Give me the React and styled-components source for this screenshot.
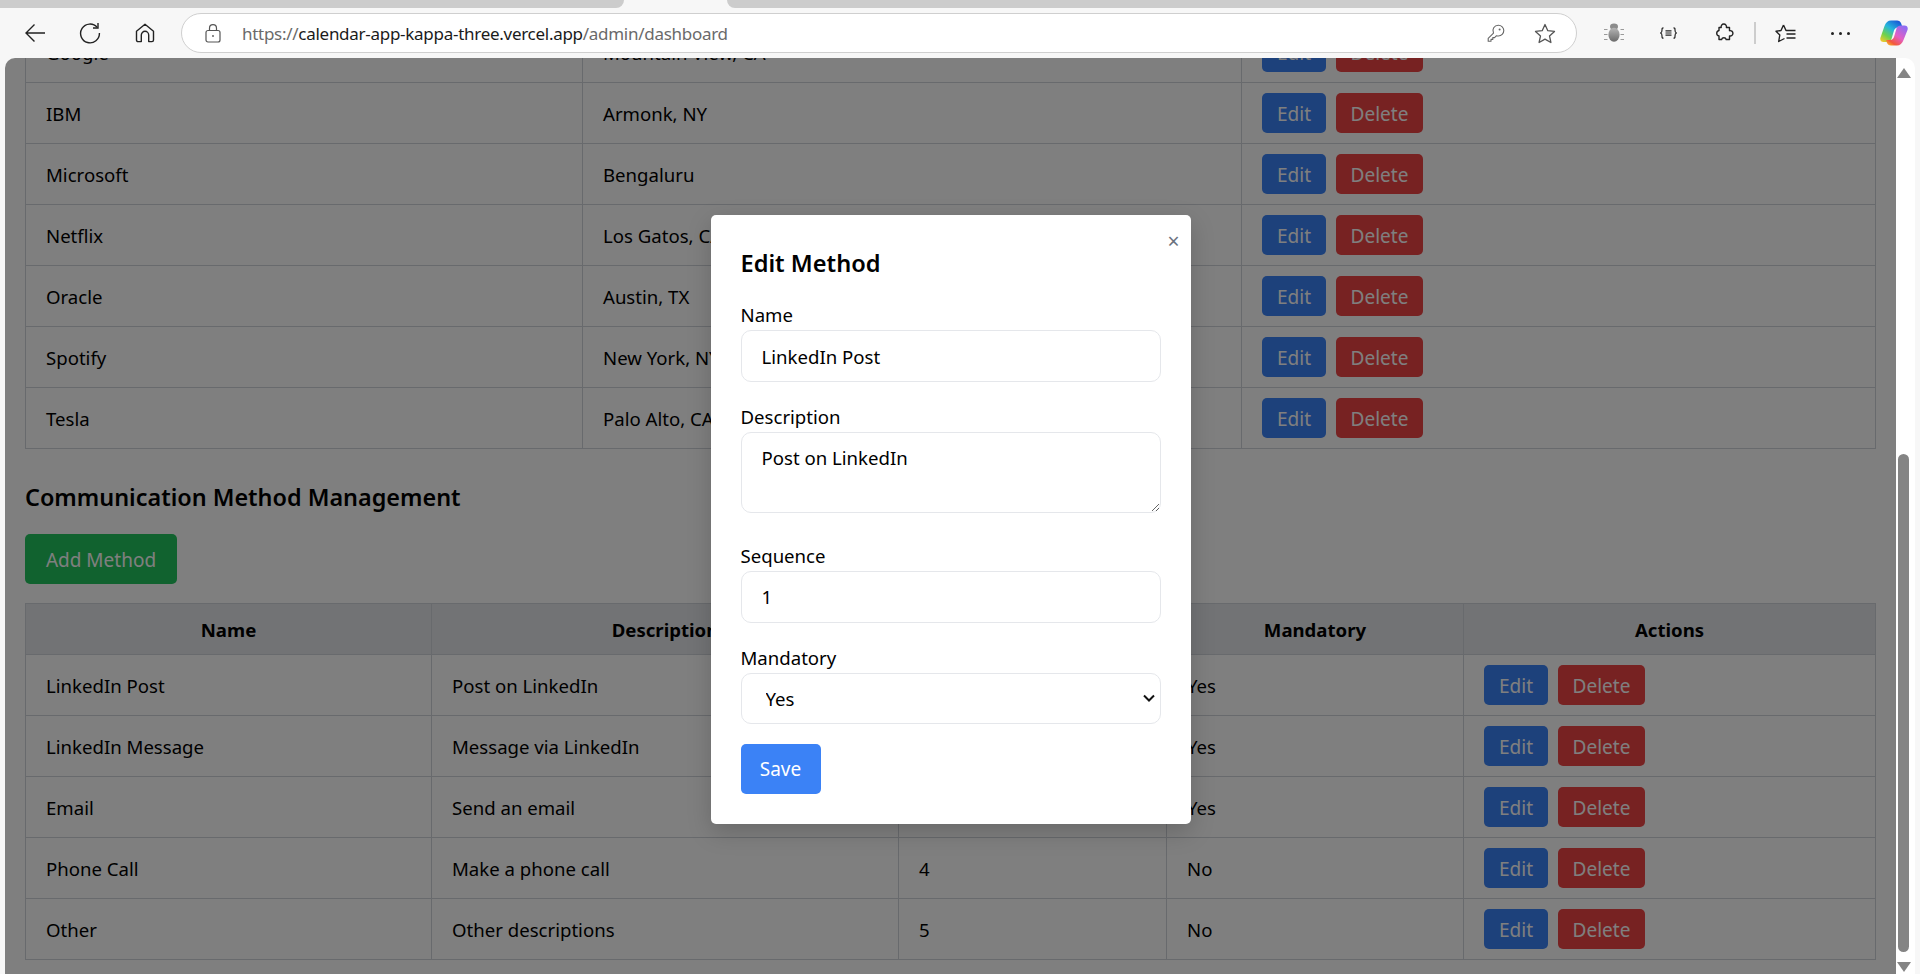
import styled, { createGlobalStyle } from "styled-components";

const companies = [
  ["Google", "Mountain View, CA"],
  ["IBM", "Armonk, NY"],
  ["Microsoft", "Bengaluru"],
  ["Netflix", "Los Gatos, CA"],
  ["Oracle", "Austin, TX"],
  ["Spotify", "New York, NY"],
  ["Tesla", "Palo Alto, CA"],
];

const methods = [
  ["LinkedIn Post", "Post on LinkedIn", 1, "Yes"],
  ["LinkedIn Message", "Message via LinkedIn", 2, "Yes"],
  ["Email", "Send an email", 3, "Yes"],
  ["Phone Call", "Make a phone call", 4, "No"],
  ["Other", "Other descriptions", 5, "No"],
];

function RowActions() {
  return (
    <ActionRow>
      <ActionButton $tone="blue">Edit</ActionButton>
      <ActionButton $tone="red">Delete</ActionButton>
    </ActionRow>
  );
}

function BrowserBar() {
  return (
    <>
      <TabStrip>
        <StripPiece $width="624px" $corner="right" />
        <ActiveTab />
        <StripPiece $corner="left" />
      </TabStrip>
      <Toolbar>
        <IconSlot>
          <svg width="22" height="20" viewBox="0 0 22 20" fill="none" stroke="#222" strokeWidth="1.4">
            <path d="M21 10H2M10.5 1.5 2 10l8.5 8.5" />
          </svg>
        </IconSlot>
        <IconSlot>
          <svg width="22" height="22" viewBox="0 0 22 22" fill="none" stroke="#222" strokeWidth="1.4">
            <path d="M18.2 5.4A9.4 9.4 0 1 0 20.4 11" />
            <path d="M19 1v5h-5" />
          </svg>
        </IconSlot>
        <IconSlot>
          <svg width="20" height="20" viewBox="0 0 20 20" fill="none" stroke="#222" strokeWidth="1.4">
            <path d="M1.5 8.2 10 1.2l8.5 7V17a1.6 1.6 0 0 1-1.6 1.6h-3.2V12a3.7 3.7 0 0 0-7.4 0v6.6H3.1A1.6 1.6 0 0 1 1.5 17Z" strokeLinejoin="round" />
          </svg>
        </IconSlot>
        <AddressBar>
          <svg width="16" height="19" viewBox="0 0 16 19" fill="none" stroke="#555" strokeWidth="1.2">
            <rect x="1" y="6.5" width="14" height="11.5" rx="2" />
            <path d="M4.5 6.5V4.2a3.5 3.5 0 0 1 7 0v2.3" />
            <circle cx="8" cy="12" r="0.9" fill="#555" stroke="none" />
          </svg>
          <Url>
            https://<strong>calendar-app-kappa-three.vercel.app</strong>/admin/dashboard
          </Url>
          <BarIcons>
            <svg width="18" height="18" viewBox="0 0 18 18" fill="none" stroke="#666" strokeWidth="1.1">
              <path d="M11.4 1.2a5.4 5.4 0 0 1 0 10.8c-.7 0-1.3-.1-1.9-.3L7.6 13.6H5.8v1.8H4v1.8H1.2v-2.8l5.3-5.3a5.4 5.4 0 0 1 4.9-7.9Z" strokeLinejoin="round" />
              <circle cx="12.6" cy="5.4" r="1" fill="#666" stroke="none" />
            </svg>
            <svg width="22" height="21" viewBox="0 0 22 21" fill="none" stroke="#555" strokeWidth="1.3">
              <path d="m11 1.5 2.8 6.2 6.7.7-5 4.5 1.4 6.6-5.9-3.4-5.9 3.4 1.4-6.6-5-4.5 6.7-.7Z" strokeLinejoin="round" />
            </svg>
          </BarIcons>
        </AddressBar>
        <ExtensionGroup>
          <IconSlot>
            <svg width="20" height="20" viewBox="0 0 20 20">
              <defs>
                <linearGradient id="bugBody" x1="0" y1="0" x2="0" y2="1">
                  <stop offset="0" stopColor="#b5b5b5" />
                  <stop offset="1" stopColor="#6a6a6a" />
                </linearGradient>
              </defs>
              <ellipse cx="10" cy="3.6" rx="4" ry="3.2" fill="#8c8c8c" />
              <ellipse cx="10" cy="11.8" rx="5.6" ry="7" fill="url(#bugBody)" />
              <path d="M0 6.5h3.5M16.5 6.5H20M0 11.5h3.5M16.5 11.5H20M0 16.5h3.5M16.5 16.5H20" stroke="#9a9a9a" strokeWidth="1" />
            </svg>
          </IconSlot>
          <IconSlot>
            <svg width="17" height="12" viewBox="0 0 17 12" fill="none" stroke="#222" strokeWidth="1.2">
              <path d="M3.5.8c-1.6 0-1.5 1-1.5 2.2 0 1.6-.2 2.6-1.3 3 1.1.4 1.3 1.4 1.3 3 0 1.2-.1 2.2 1.5 2.2M13.5.8c1.6 0 1.5 1 1.5 2.2 0 1.6.2 2.6 1.3 3-1.1.4-1.3 1.4-1.3 3 0 1.2.1 2.2-1.5 2.2" />
              <path d="M5.5 3.8h6M5.5 6h6M5.5 8.2h6" />
            </svg>
          </IconSlot>
          <IconSlot>
            <svg width="20" height="20" viewBox="0 0 20 20" fill="none" stroke="#222" strokeWidth="1.4">
              <path d="M5 4.5h2.200a2.700 2.700 0 1 1 5.200 0h3.100v3.200a2.700 2.700 0 1 1 0 5.200v3.600h-3.300a2.400 2.400 0 0 0-4.600 0H5V13a2.800 2.800 0 0 1 0-5.500Z" strokeLinejoin="round" />
            </svg>
          </IconSlot>
        </ExtensionGroup>
        <ToolbarDivider />
        <IconSlot>
          <svg width="21" height="19" viewBox="0 0 21 19" fill="none" stroke="#222" strokeWidth="1.4">
            <path d="M8.5 1 11 6.500h9.500M8.500 1 6 6.500l-5 .8 3.800 3.700-1.100 6.500 5.800-3" strokeLinejoin="round" />
            <path d="M11.500 10h9M11.500 14h9" />
          </svg>
        </IconSlot>
        <IconSlot>
          <Dots>
            <i />
            <i />
            <i />
          </Dots>
        </IconSlot>
        <CopilotSlot>
          <svg width="28" height="26" viewBox="0 0 28 26">
            <defs>
              <linearGradient id="copilotLeft" x1="0.8" y1="0" x2="0.1" y2="1">
                <stop offset="0" stopColor="#1a56d6" />
                <stop offset="0.4" stopColor="#25b6dc" />
                <stop offset="0.72" stopColor="#6fd24c" />
                <stop offset="1" stopColor="#f5c92c" />
              </linearGradient>
              <linearGradient id="copilotRight" x1="0.9" y1="0.1" x2="0.2" y2="1">
                <stop offset="0" stopColor="#8f6cf2" />
                <stop offset="0.5" stopColor="#e45fc4" />
                <stop offset="0.85" stopColor="#f2583c" />
                <stop offset="1" stopColor="#f9a02e" />
              </linearGradient>
            </defs>
            <path d="M11 .5h6c2 0 3.500 1 4.200 3l1.300 4H18c-2.500 0-3.500 1.500-4 3L11.500 19c-.5 2-2.500 3-4.500 3H3.500C1 22-.3 20 .5 17.500L4.500 6C5.700 2.500 8 .5 11 .5Z" fill="url(#copilotLeft)" />
            <path d="M17 25.500h-6c-2 0-3.500-1-4.200-3L6 20h4c2.500 0 3.500-1.500 4-3l2.500-8.500c.5-2 2.500-3 4.500-3h3.500c2.500 0 3.800 2 3 4.500l-4 10c-1.200 3.500-3.500 5.500-6.500 5.500Z" fill="url(#copilotRight)" />
          </svg>
        </CopilotSlot>
      </Toolbar>
    </>
  );
}

function EditMethodModal() {
  return (
    <Overlay>
      <Modal>
        <CloseButton>×</CloseButton>
        <ModalTitle>Edit Method</ModalTitle>
        <FieldLabel>Name</FieldLabel>
        <TextField defaultValue="LinkedIn Post" />
        <FieldLabel>Description</FieldLabel>
        <DescriptionField defaultValue="Post on LinkedIn" />
        <FieldLabel>Sequence</FieldLabel>
        <TextField type="number" defaultValue="1" />
        <FieldLabel>Mandatory</FieldLabel>
        <SelectField defaultValue="Yes">
          <option>Yes</option>
          <option>No</option>
        </SelectField>
        <SaveButton>Save</SaveButton>
      </Modal>
    </Overlay>
  );
}

export default function App() {
  return (
    <Frame>
      <GlobalStyle />
      <BrowserBar />
      <Viewport>
        <Page>
          <PageContent>
            <DataTable>
              <colgroup>
                <col width="557" />
                <col width="659" />
                <col width="634" />
              </colgroup>
              <tbody>
                {companies.map(([name, location]) => (
                  <tr key={name}>
                    <Cell>{name}</Cell>
                    <Cell>{location}</Cell>
                    <Cell>
                      <RowActions />
                    </Cell>
                  </tr>
                ))}
              </tbody>
            </DataTable>
            <SectionTitle>Communication Method Management</SectionTitle>
            <AddButton>Add Method</AddButton>
            <DataTable>
              <colgroup>
                <col width="406" />
                <col width="467" />
                <col width="268" />
                <col width="297" />
                <col width="412" />
              </colgroup>
              <thead>
                <tr>
                  <HeadCell>Name</HeadCell>
                  <HeadCell>Description</HeadCell>
                  <HeadCell>Sequence</HeadCell>
                  <HeadCell>Mandatory</HeadCell>
                  <HeadCell>Actions</HeadCell>
                </tr>
              </thead>
              <tbody>
                {methods.map(([name, description, sequence, mandatory]) => (
                  <tr key={name}>
                    <Cell>{name}</Cell>
                    <Cell>{description}</Cell>
                    <Cell>{sequence}</Cell>
                    <Cell>{mandatory}</Cell>
                    <Cell>
                      <RowActions />
                    </Cell>
                  </tr>
                ))}
              </tbody>
            </DataTable>
          </PageContent>
          <EditMethodModal />
        </Page>
        <ScrollBar>
          <ScrollArrow $up />
          <ScrollTrack>
            <ScrollThumb />
          </ScrollTrack>
          <ScrollArrow />
        </ScrollBar>
      </Viewport>
    </Frame>
  );
}

const GlobalStyle = createGlobalStyle`
  html, body {
    margin: 0;
    padding: 0;
    overflow: hidden;
  }

  * {
    box-sizing: border-box;
  }

  body {
    font-family: "Noto Sans", "Open Sans", sans-serif;
    font-size: 18.6px;
    color: #000;
  }
`;

const Frame = styled.div`
  display: flex;
  flex-direction: column;
  width: 1920px;
  height: 974px;
  background: #f7f7f7;
  overflow: hidden;
`;

const TabStrip = styled.div`
  display: flex;
  height: 8px;
  flex: none;
`;

const StripPiece = styled.div`
  background: #cccccc;
  flex: ${(props) => (props.$width ? `0 0 ${props.$width}` : "1")};
  border-bottom-${(props) => props.$corner}-radius: 8px;
`;

const ActiveTab = styled.div`
  flex: 0 0 103px;
`;

const Toolbar = styled.div`
  display: flex;
  align-items: center;
  height: 50px;
  flex: none;
  padding: 0 0 0 7px;
`;

const IconSlot = styled.div`
  display: flex;
  align-items: center;
  justify-content: center;
  width: 55px;
  height: 40px;
  flex: none;
`;

const CopilotSlot = styled(IconSlot)`
  width: 52px;
`;

const AddressBar = styled.div`
  display: flex;
  align-items: center;
  width: 1396px;
  height: 40px;
  margin: 0 9px 0 9px;
  padding: 0 20px 0 23px;
  background: #fff;
  border: 1px solid #cfcfcf;
  border-radius: 20px;
`;

const Url = styled.span`
  margin-left: 21px;
  font-size: 17px;
  letter-spacing: -0.28px;
  color: #6a6a6a;
  white-space: nowrap;

  strong {
    font-weight: 400;
    color: #1b1b1b;
  }
`;

const BarIcons = styled.div`
  display: flex;
  align-items: center;
  gap: 29px;
  margin-left: auto;
`;

const ExtensionGroup = styled.div`
  display: flex;
`;

const ToolbarDivider = styled.div`
  width: 2px;
  height: 22px;
  margin: 0 2px 0 3px;
  background: #cdcdcd;
`;

const Dots = styled.div`
  display: flex;
  gap: 5px;

  i {
    width: 3px;
    height: 3px;
    border-radius: 50%;
    background: #222;
  }
`;

const Viewport = styled.div`
  display: flex;
  flex: 1;
  min-height: 0;
  padding: 0 5px;
`;

const Page = styled.main`
  position: relative;
  flex: 1;
  overflow: hidden;
  background: #fff;
  border-top-left-radius: 10px;
`;

const PageContent = styled.div`
  margin-top: -37px;
  padding: 0 21px 0 20px;
`;

const DataTable = styled.table`
  width: 100%;
  table-layout: fixed;
  border-collapse: collapse;
`;

const Cell = styled.td`
  height: 61px;
  padding: 2px 20px 0;
  border: 1px solid #d1d5db;
  line-height: 30px;
`;

const HeadCell = styled.th`
  height: 51px;
  padding: 1px 20px 0;
  background: #e5e7eb;
  border: 1px solid #d1d5db;
  font-weight: 700;
  text-align: center;
`;

const ActionRow = styled.div`
  display: flex;
  gap: 10px;
  margin-top: -2px;
`;

const ActionButton = styled.button`
  width: ${(props) => (props.$tone === "blue" ? "64px" : "87px")};
  height: 40px;
  padding: 1px 0 0;
  border: none;
  border-radius: 5px;
  background: ${(props) => (props.$tone === "blue" ? "#3b82f6" : "#ef4444")};
  color: #fff;
  font-family: inherit;
  font-size: 19px;
`;

const SectionTitle = styled.h2`
  margin: 31px 0 19px;
  font-size: 23.4px;
  line-height: 35px;
  font-weight: 600;
`;

const AddButton = styled.button`
  display: block;
  width: 152px;
  height: 50px;
  margin-bottom: 19px;
  padding: 1px 0 0;
  border: none;
  border-radius: 5px;
  background: #22c55e;
  color: #fff;
  font-family: inherit;
  font-size: 19px;
`;

const ScrollBar = styled.div`
  display: flex;
  flex-direction: column;
  align-items: center;
  flex: 0 0 19px;
  padding: 10px 4px 2px 0;
  background: #fff;
  border-top-right-radius: 10px;
`;

const ScrollArrow = styled.div`
  width: 0;
  height: 0;
  border-left: 7px solid transparent;
  border-right: 7px solid transparent;
  border-${(props) => (props.$up ? "bottom" : "top")}: 10px solid #848484;
`;

const ScrollTrack = styled.div`
  display: flex;
  flex-direction: column;
  justify-content: flex-end;
  flex: 1;
  padding-bottom: 10px;
`;

const ScrollThumb = styled.div`
  width: 11px;
  height: 498px;
  background: #848484;
  border-radius: 6px;
`;

const Overlay = styled.div`
  position: absolute;
  inset: 0;
  display: flex;
  align-items: center;
  justify-content: center;
  padding-top: 7px;
  background: rgba(0, 0, 0, 0.5);
`;

const Modal = styled.form`
  position: relative;
  width: 480px;
  padding: 30px;
  background: #fff;
  border-radius: 5px;
  box-shadow: 0 8px 24px rgba(0, 0, 0, 0.18);
`;

const CloseButton = styled.span`
  position: absolute;
  top: 13px;
  right: 11px;
  font-size: 21px;
  line-height: 26px;
  color: #6b7280;
`;

const ModalTitle = styled.h3`
  margin: 0 0 20px;
  padding-top: 1px;
  height: 35px;
  font-size: 23.6px;
  line-height: 35px;
  font-weight: 600;
`;

const FieldLabel = styled.label`
  display: block;
  height: 30px;
  line-height: 30px;
`;

const TextField = styled.input`
  display: block;
  width: 100%;
  height: 51.6px;
  margin-bottom: 20px;
  padding: 0 20px;
  border: 1px solid #e5e7eb;
  border-radius: 10px;
  background: #fff;
  color: #000;
  font: inherit;
  appearance: textfield;
`;

const DescriptionField = styled.textarea`
  display: block;
  width: 100%;
  height: 81px;
  margin-bottom: 28px;
  padding: 12px 20px;
  border: 1px solid #e5e7eb;
  border-radius: 10px;
  background: #fff;
  color: #000;
  font: inherit;
`;

// own chevron, the native one is smaller than the reference's
const SelectField = styled.select`
  display: block;
  width: 100%;
  height: 51px;
  margin-bottom: 20px;
  padding: 0 20px 0 24px;
  border: 1px solid #e5e7eb;
  border-radius: 10px;
  color: #000;
  font: inherit;
  appearance: none;
  background: #fff url("data:image/svg+xml,%3Csvg xmlns='http://www.w3.org/2000/svg' width='12' height='8' viewBox='0 0 12 8' fill='none' stroke='%23111' stroke-width='2'%3E%3Cpath d='M1 1.5 6 6.5 11 1.5'/%3E%3C/svg%3E") no-repeat right 5px center;
`;

const SaveButton = styled.button`
  display: block;
  width: 80px;
  height: 50px;
  padding: 0;
  border: none;
  border-radius: 5px;
  background: #3b82f6;
  color: #fff;
  font-family: inherit;
  font-size: 19px;
`;
